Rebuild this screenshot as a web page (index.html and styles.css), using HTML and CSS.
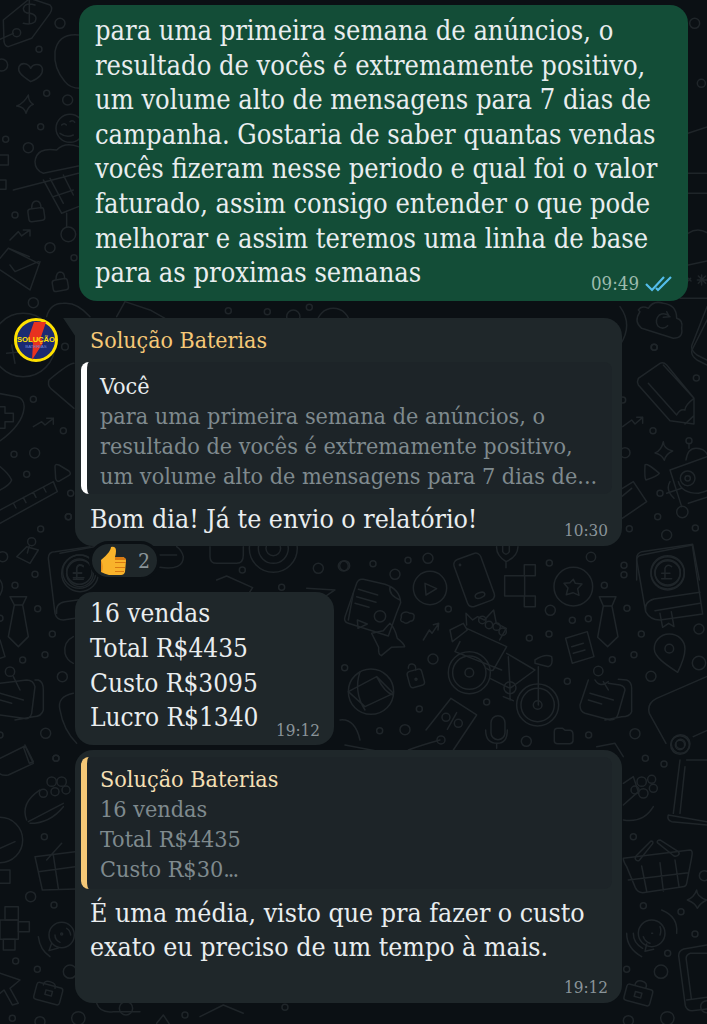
FILE: index.html
```html
<!DOCTYPE html>
<html lang="pt-BR">
<head>
  <meta charset="UTF-8" />
  <meta name="viewport" content="width=device-width, initial-scale=1.0"/>
  <title>Conversa</title>
  <link rel="stylesheet" href="styles.css">
</head>
<body>

  <svg class="wallpaper" width="707" height="1024" viewBox="0 0 707 1024" aria-hidden="true">
    <!-- left top -->
    <g transform="scale(.3333)">
      <path d="M10 60L90-5l60 20q10 10 0 25l-55 75-70 25q-10 0-13-15zM0 118l40-18"/>
      <circle cx="50" cy="98" r="12"/>
      <path d="M105 15q-30-10-35 10 0 15 20 15 25 5 15 25-10 10-35 5M88 0v70"/>
      <circle cx="180" cy="70" r="15"/><circle cx="117" cy="148" r="9"/>
      <path d="M235 105q-60-5-70 50-5 50 30 90 15 20 45 20"/>
      <path d="M92 245c-30-20-40-30-35-45 8-15 28-10 35 5 8-15 30-15 35 0 3 15-10 30-35 40z"/>
      <circle cx="5" cy="195" r="18"/><circle cx="140" cy="280" r="9"/><circle cx="203" cy="300" r="15"/>
      <circle cx="17" cy="418" r="9"/><circle cx="85" cy="443" r="15"/><circle cx="122" cy="380" r="9"/>
      <path d="M85 285q0 20 15 28-15 5-22 27-5-20-28-22 22-8 35-33z"/>
      <circle cx="210" cy="385" r="42"/><path d="M185 375q8-8 14 0M210 365q8-6 14 2M180 400q20 15 40 5"/>
      <path d="M235 440q-40-15-65 10-60-10-65 35 0 25 25 35l105-22"/>
      <path d="M40 570l195-50M130 540l55 100 50-20M150 535l40 75M190 525l30 60M160 590l60-20M200 640v40"/>
      <circle cx="205" cy="703" r="22"/>
      <rect x="85" y="625" width="48" height="38" rx="8" transform="rotate(-8 109 644)"/>
      <path d="M95 625q0-22 14-22 14 0 14 22"/>
      <rect x="158" y="838" width="46" height="34" rx="8" transform="rotate(-10 181 855)"/>
      <path d="M168 838q0-20 12-22 14 0 14 20"/>
      <path d="M30 720l25-25 10 13 25-18M70 690h20v18"/>
      <path d="M0 775l25-30 63 25M0 810l90 60 30-85M30 795l15 20 70-30M25 745l90 45"/>
      <rect x="-8" y="465" width="33" height="30"/><rect x="-8" y="540" width="26" height="28"/>
      <circle cx="150" cy="743" r="15"/><circle cx="222" cy="773" r="9"/><circle cx="45" cy="645" r="9"/>
      <circle cx="100" cy="908" r="15"/>
      <path d="M350 950l25-45 75 25 45 25M140 950q10-40 50-40 40-5 80 40"/>
      <circle cx="685" cy="932" r="9"/><circle cx="802" cy="935" r="9"/><circle cx="928" cy="922" r="9"/>
      <circle cx="1000" cy="975" r="50"/><circle cx="880" cy="950" r="20"/>
    </g>
    <!-- left, next to avatar -->
    <g transform="translate(0 310) scale(.3333)">
      <circle cx="70" cy="105" r="95"/><path d="M20 130l45-5M35 105l10 55"/>
      <circle cx="195" cy="110" r="10"/>
      <path d="M222 160q-15 0-75 50-5 15 5 25l70 60"/>
      <path d="M-5 250l55 10q25 5 22 35-5 50-75 100M0 290h15v20h25v25H15v20H0"/>
      <circle cx="100" cy="268" r="9"/>
      <path d="M100 350l25-15 10 10 25-20M140 325h20v18"/>
      <circle cx="190" cy="362" r="9"/><circle cx="42" cy="433" r="9"/><circle cx="104" cy="429" r="15"/>
      <path d="M165 470q0-10 12-5l30 18q8 8 0 13l-28 17q-10 3-12-8zM0 470q25 20 35 40-5 15-35 30"/>
      <circle cx="80" cy="493" r="9"/><circle cx="212" cy="550" r="9"/>
      <path d="M0 600l160-85 12 30L0 640M40 579l8 15M70 563l8 15M100 547l8 15M130 531l8 15"/>
    </g>
    <!-- left, middle -->
    <g transform="translate(0 500) scale(.3333)">
      <path d="M50 170l40 20 25-40-35-10z"/><circle cx="95" cy="125" r="12"/><path d="M88 137l-6 22"/>
      <circle cx="122" cy="87" r="9"/><circle cx="105" cy="223" r="9"/><circle cx="45" cy="256" r="9"/>
      <circle cx="113" cy="326" r="9"/><circle cx="157" cy="402" r="9"/><circle cx="135" cy="464" r="9"/>
      <circle cx="68" cy="480" r="9"/><circle cx="187" cy="530" r="15"/><circle cx="137" cy="700" r="15"/>
      <circle cx="168" cy="775" r="9"/><circle cx="0" cy="705" r="9"/><circle cx="0" cy="355" r="9"/>
      <circle cx="205" cy="50" r="9"/><circle cx="8" cy="170" r="15"/>
      <path d="M30 290h50l-12 25 17 95-30 30-30-30 18-95zM43 315h25"/>
      <path d="M145 175q0-20 20-20l105-15M145 175l20 165q5 20 25 20l35-5M170 340q-5-30 25-35l75-10"/>
      <circle cx="238" cy="215" r="50"/><circle cx="238" cy="215" r="38"/>
      <path d="M250 198q-15-10-20 5v30M220 218h25M220 233h32"/>
      <circle cx="30" cy="515" r="14"/><path d="M40 530l20 40"/>
      <path d="M0 550l80-10q20 0 25 20l-10 80q-5 20-25 15l-70-10M105 540h10q15 5 15 30v60q-5 20-30 20l-55 10M0 580l70 20M0 600l35 10"/>
      <path d="M0 775l75-37 25 52-75 35q-25 5-35-15M75 735l25 50-12 5-18-50"/>
      <path d="M220 580q-50 10-40 50 10 60 50 100M220 410q-30 15-25 50 5 20 25 30"/>
      <path d="M0 240q15 20 0 45M0 420l15 50-15 5"/>
    </g>
    <!-- left, bottom -->
    <g transform="translate(0 740) scale(.3333)">
      <circle cx="168" cy="55" r="9"/>
      <path d="M85 245l105-55M80 240q-20-50 40-90M90 250q60 0 100-50"/>
      <circle cx="155" cy="125" r="14"/><circle cx="185" cy="125" r="14"/><circle cx="130" cy="160" r="12"/>
      <circle cx="165" cy="155" r="12"/><circle cx="198" cy="150" r="12"/>
      <circle cx="0" cy="300" r="68"/><path d="M0 325l45-20"/>
      <circle cx="133" cy="290" r="9"/>
      <path d="M105 350l120-15M105 350l22 100 100-3M115 395l110-15M160 345l15 100M140 360l45-50M0 390h30v40H0"/>
      <circle cx="92" cy="470" r="15"/><circle cx="162" cy="495" r="9"/>
      <rect x="15" y="500" width="40" height="40"/><rect x="0" y="540" width="55" height="58"/>
      <rect x="55" y="545" width="33" height="30"/><rect x="10" y="598" width="35" height="32"/>
      <circle cx="185" cy="585" r="38"/><path d="M155 610l-8 22 28-8M165 585q0 15 15 22M115 590q5 40 35 60M200 565q10 5 12 20"/>
      <circle cx="185" cy="582" r="3"/>
      <circle cx="47" cy="663" r="9"/><circle cx="112" cy="688" r="9"/><circle cx="210" cy="695" r="20"/>
      <path d="M0 700l60 20-30 25 25 45-18 5-25-45-12 10"/>
      <rect x="105" y="735" width="80" height="52" rx="8" transform="rotate(15 145 760)"/>
      <path d="M130 735q3-15 20-10 20 5 15 20"/><rect x="136" y="752" width="20" height="14" transform="rotate(15 146 759)"/>
      <circle cx="235" cy="835" r="20"/><circle cx="120" cy="845" r="15"/><circle cx="37" cy="835" r="9"/>
      <circle cx="378" cy="805" r="20"/><circle cx="555" cy="825" r="9"/><circle cx="855" cy="802" r="9"/>
      <path d="M290 790q10 30 50 25h80M600 830l70-35 60 25M470 850l20-25 20 30"/>
    </g>
    <!-- gap under first incoming bubble -->
    <g transform="translate(60 490) scale(.3333)">
      <circle cx="60" cy="250" r="55"/><circle cx="60" cy="250" r="40"/><path d="M70 230q-15-10-20 5v30M40 250h25M40 268h30"/>
      <path d="M450 170v30q0 20 20 20h60q20 0 20-25v-25M300 195h50M300 232q70 10 70-32-5-20-20-30"/>
      <circle cx="640" cy="175" r="72"/><circle cx="640" cy="175" r="45"/><circle cx="640" cy="175" r="22"/>
      <circle cx="547" cy="240" r="9"/><circle cx="775" cy="235" r="15"/><circle cx="850" cy="228" r="15"/>
      <path d="M470 270l30-12 78 35-10 15M740 295l85 5-30 20M880 310l-15 80M0 190l130-25"/>
      <circle cx="665" cy="292" r="9"/><circle cx="25" cy="80" r="9"/>
    </g>
    <!-- right of short bubble -->
    <g transform="translate(340 540) scale(.3333)">
      <circle cx="14" cy="77" r="15"/><circle cx="99" cy="71" r="9"/><circle cx="165" cy="103" r="15"/>
      <circle cx="204" cy="61" r="9"/><circle cx="264" cy="55" r="15"/><circle cx="325" cy="207" r="9"/>
      <circle cx="628" cy="69" r="9"/><circle cx="753" cy="51" r="14"/><circle cx="793" cy="136" r="9"/>
      <circle cx="852" cy="104" r="9"/><circle cx="631" cy="211" r="15"/><circle cx="697" cy="241" r="9"/>
      <circle cx="745" cy="236" r="9"/><circle cx="861" cy="205" r="9"/><circle cx="568" cy="294" r="9"/>
      <circle cx="627" cy="282" r="9"/><circle cx="904" cy="282" r="9"/><circle cx="1077" cy="267" r="15"/>
      <circle cx="882" cy="344" r="9"/><circle cx="817" cy="359" r="9"/><circle cx="1077" cy="369" r="20"/>
      <circle cx="933" cy="409" r="15"/><circle cx="682" cy="424" r="9"/><circle cx="279" cy="357" r="15"/>
      <circle cx="14" cy="383" r="9"/><circle cx="440" cy="486" r="9"/><circle cx="238" cy="507" r="9"/>
      <circle cx="119" cy="572" r="9"/><circle cx="195" cy="569" r="15"/><circle cx="559" cy="604" r="15"/>
      <circle cx="746" cy="585" r="9"/><circle cx="885" cy="581" r="15"/>
      <circle cx="270" cy="144" r="50"/><path d="M255 130l35 16-32 19z"/>
      <rect x="360" y="45" width="85" height="150" rx="16" transform="rotate(-20 402 120)"/>
      <ellipse cx="420" cy="166" rx="15" ry="8" transform="rotate(-20 420 166)"/><circle cx="360" cy="75" r="2"/>
      <path d="M470 20q-2 25 28 45 35-15 36-45M498 65v18M488 0v35q10 15 20 0V0"/>
      <rect x="553" y="74" width="33" height="33"/><rect x="494" y="107" width="60" height="61"/><rect x="553" y="168" width="33" height="32"/>
      <circle cx="700" cy="140" r="58"/>
      <path d="M700 118l6 12 20 2-13 14 4 20-18-8-20 6 5-20-12-14 18-2z"/>
      <path d="M778 170h50l-12 28 18 92-31 30-30-28 17-94zM790 198h26"/>
      <path d="M905 45l152-30 31 207-128 18q-30 0-43-25L890 60q0-12 15-15zM917 215q-5-30 25-38l138-20M945 212l135-22M960 220l8 42 18-12 16 10-8-45"/>
      <circle cx="983" cy="97" r="50"/><circle cx="983" cy="97" r="38"/>
      <path d="M995 80q-15-10-20 5v30M965 100h25M965 116h30"/>
      <path d="M988 282c-30 0-46 25-45 45 0 25 40 50 70 70 15-30 22-55 22-70 0-25-20-45-47-45z"/><circle cx="988" cy="326" r="13"/>
      <path d="M70 118l65 15q45 15 47 55l-12 30-25 70-120-38q-15-5-10-20l35-100q5-15 20-12zM150 140q-5 25 30 40M55 148l58 17M50 170l58 17M45 190l42 12M52 240l30 12-28 13z"/>
      <circle cx="120" cy="229" r="17"/>
      <path d="M150 250q15 15 22 45 20 15 22 25l-40 2-30 25q-10-3-8-25L95 280l35-8q10-12 20-22zM190 218q10-5 20 2 15 0 12 12 0 12-12 12-12 10-20 2-12-2-6-14-2-10 6-14z"/>
      <path d="M250 300l18-30 8 10 19-28M280 254l16-4-2 20"/>
      <circle cx="388" cy="398" r="63"/><circle cx="388" cy="398" r="50"/><circle cx="388" cy="398" r="13"/>
      <circle cx="593" cy="495" r="63"/><circle cx="593" cy="495" r="50"/><circle cx="593" cy="495" r="13"/>
      <path d="M330 270l40-20 12 20-45 35zM380 265l120 55-40 70q-10 5-20-5M360 305l-15 30 140 55M500 340l85 50-75 55-60-30M505 350l5 90M595 380v115M585 360q30-20 50-10 5 25-10 30l-40-10zM490 470l30 12M510 440v40"/>
      <path d="M380 255l-2-35 20 20 15-10 20 10 28-30 8 40 30 15-20 35"/>
      <circle cx="427" cy="240" r="11"/><circle cx="447" cy="255" r="11"/><circle cx="470" cy="260" r="11"/><circle cx="488" cy="275" r="11"/>
      <circle cx="510" cy="443" r="18"/>
      <path d="M677 295l65-20 20 75-65 20zM695 320l35-10M700 340l35-10"/>
      <circle cx="775" cy="393" r="14"/><path d="M765 420q15 25 40 5M790 425l15 25"/>
      <path d="M745 420l-25 75q0 20 15 25l75 20q20 0 25-20l20-70q0-10-15-15l-35-5M835 418l25 2q15 5 15 25v70q-5 15-30 15l-50 10M750 460l70 20M745 480l40 12"/>
      <circle cx="93" cy="455" r="68"/><path d="M25 455l85-45 50 50-85 40zM60 395q-20 60 15 115M110 410q25 50 50 55"/>
      <rect x="205" y="390" width="45" height="50" rx="10" transform="rotate(-15 228 415)"/><path d="M205 385q0-15 12-13 12 2 10 18"/><circle cx="228" cy="418" r="3"/>
      <path d="M258 570l75-95 77 50-70 105M205 630q40-15 95-30"/><circle cx="318" cy="532" r="12"/><circle cx="355" cy="550" r="12"/><path d="M350 518l-28 50"/>
      <circle cx="303" cy="600" r="12"/>
      <rect x="453" y="527" width="42" height="72" rx="21"/><path d="M437 570q0 40 35 40 30 0 30-40M470 610v15"/>
      <path d="M643 575q0-10 10-10h15l8 6h15q8 2 8 12v20q-2 8-10 8h-36q-10 0-10-8z"/>
      <path d="M1100 410L950 475q-30 15-22 45l50 90M1060 590l40-18"/><circle cx="1022" cy="612" r="28"/><circle cx="1022" cy="612" r="14"/>
      <path d="M0 540q45-5 60 60M15 615l130 25M770 620l55-10M825 610l25 40"/>
    </g>
    <!-- right column -->
    <g transform="translate(620 300) scale(.3333)">
      <path d="M60 35q-20 30 5 50l95 30q30 0 25-30 5-25-15-30 0-40-40-45-30-10-45 15-20-10-30 5z"/><path d="M150 50q-15-15-32-5-15 15-5 32 15 15 30 0M140 35l8 15-18 2"/>
      <circle cx="102" cy="142" r="9"/><circle cx="229" cy="234" r="9"/>
      <path d="M55 235l65-45q10-5 20 5l82 100v77l-72-10-95-107q-5-10 0-20zM85 250l85 95M130 195l92 100M170 345q10-20 25-15 0-15 27-35M195 372l27-25"/>
      <circle cx="99" cy="392" r="9"/>
      <path d="M130 425q0 20 28 28-20 8-25 28-8-18-28-22 20-8 25-34zM75 495q5-8 43 25-5 8-40 20-5-5-3-45zM8 380l27-20 10 12 23-20M50 352h18v18"/>
      <circle cx="8" cy="300" r="9"/><circle cx="15" cy="458" r="15"/>
      <path d="M150 510l111-40M150 510l35 110M205 610l56-18M198 480q5-35 30-35 25 0 35 20M207 430v15M150 545q-15 25 12 50"/>
      <circle cx="187" cy="636" r="17"/><circle cx="203" cy="535" r="22"/><circle cx="203" cy="535" r="8"/>
      <path d="M175 545q10 35 60 35 20-5 30-10M185 565l-45 15"/>
      <circle cx="207" cy="422" r="9"/><circle cx="120" cy="580" r="9"/><circle cx="113" cy="650" r="9"/>
      <circle cx="28" cy="686" r="9"/><circle cx="140" cy="705" r="15"/><circle cx="226" cy="684" r="9"/>
      <path d="M0 660l80-55-40-60L0 570M5 590l30-25"/>
      <path d="M50 840V775q0-15 15-20l153-22 20 107"/><circle cx="143" cy="820" r="50"/><circle cx="143" cy="820" r="38"/>
      <circle cx="12" cy="796" r="9"/>
      <path d="M0 135q40-60 0-115M261 60l-45 90q-5 15 15 30l30 15"/>
    </g>
    <!-- right column, bottom -->
    <g transform="translate(610 740) scale(.3333)">
      <circle cx="106" cy="55" r="9"/><circle cx="162" cy="72" r="9"/><circle cx="70" cy="290" r="9"/>
      <circle cx="210" cy="15" r="28"/><circle cx="210" cy="15" r="14"/>
      <path d="M40 130l30-20 15 45-45 40M40 240q60 10 90-40"/>
      <circle cx="95" cy="125" r="14"/><circle cx="125" cy="118" r="12"/><circle cx="130" cy="145" r="12"/><circle cx="100" cy="160" r="14"/><circle cx="75" cy="150" r="12"/>
      <path d="M210 60l-20 160M230 60h61M225 80l-15 140M175 225l116 20M175 225q-5 15 10 20l106 10"/>
      <path d="M40 355l200-25q10 0 5 22L230 430q-2 10-12 10l-120 18q-15 0-22-15L50 380q-10-15-10-25zM95 378l15 75M150 368l10 85M195 360l12 80M55 420l180-22"/>
      <path d="M78 360q-5-5 0-12l45-45q8 0 5 8l-40 50q-5 3-10-1zM205 345q5-5 0-10l-55-35q-10 0-8 8l50 40q8 2 13-3z"/>
      <path d="M260 450q0 20 30 30-20 10-28 25-5-15-30-25 20-8 28-30z"/>
      <circle cx="100" cy="497" r="9"/><circle cx="213" cy="515" r="9"/><circle cx="255" cy="582" r="9"/>
      <circle cx="283" cy="407" r="15"/><circle cx="173" cy="640" r="9"/><circle cx="50" cy="688" r="9"/><circle cx="153" cy="695" r="20"/>
      <circle cx="125" cy="580" r="40"/><path d="M110 612l-5 22 26-6M125 580h3M100 590q5 15 20 20M150 560q5 10 0 25"/>
      <path d="M50 580q0 45 45 70M155 510q50 20 45 70M70 580q0 30 28 45"/>
      <rect x="45" y="740" width="80" height="50" rx="8" transform="rotate(15 85 765)"/>
      <path d="M75 735q3-15 20-12 20 5 12 22"/><rect x="74" y="757" width="20" height="15" transform="rotate(15 84 765)"/>
      <path d="M291 615l-70 12q-15 5-15 20l20 150q5 15 20 15l45-5M291 640h-50q-15 5-12 20l15 115M230 780l61-8"/>
      <circle cx="55" cy="842" r="15"/><circle cx="172" cy="835" r="20"/><circle cx="290" cy="800" r="18"/>
    </g>
    <!-- far right top -->
    <g transform="translate(520 250) scale(.3333)">
      <path d="M505 45l56-12M505 85l8 8M512 85l-8 8M545 75v30M532 90h28M535 78l22 22M557 78l-22 22M480 145h81"/>
      <circle cx="403" cy="292" r="9"/>
      <path d="M561 170l-45 115q-5 15 15 30l30 15"/>
    </g>
    <g transform="translate(688 0) scale(.3333)">
      <circle cx="20" cy="70" r="15"/><circle cx="40" cy="250" r="12"/><path d="M0 400l60-20M0 520h60v60H0M0 700q30-20 60 0"/>
    </g>
  </svg>

  <div class="chat">
    <div class="msg out">
      <div class="foot">
        <p>para uma primeira semana de anúncios, o<br>resultado de vocês é extremamente positivo,<br>um volume alto de mensagens para 7 dias de<br>campanha. Gostaria de saber quantas vendas<br>vocês fizeram nesse periodo e qual foi o valor<br>faturado, assim consigo entender o que pode<br>melhorar e assim teremos uma linha de base<br>para as proximas semanas</p>
        <span class="time time-out">09:49
          <svg class="ticks" width="28" height="18" viewBox="0 0 28 18"><path d="M1 9l6 6L19 2M11 13l2 2L26 2"/></svg>
        </span>
      </div>
    </div>

    <div class="group">
      <svg class="avatar" width="44" height="44" viewBox="0 0 44 44">
        <circle cx="22" cy="22" r="20.5" fill="#1b2a72" stroke="#ffe100" stroke-width="3"/>
        <path d="M20 4h12l-5 15 2 6-11 17 1-17-5-4z" fill="#e8321f"/>
        <text x="22" y="23.5" class="av-big">SOLUÇÃO</text>
        <text x="22" y="30" class="av-small">BATERIAS</text>
      </svg>
      <div class="msg in first">
        <div class="sender">Solução Baterias</div>
        <div class="quote me">
          <div class="q-name">Você</div>
          <div>para uma primeira semana de anúncios, o<br>resultado de vocês é extremamente positivo,<br>um volume alto de mensagens para 7 dias de...</div>
        </div>
        <div class="foot text">
          <p>Bom dia! Já te envio o relatório!</p>
          <span class="time">10:30</span>
        </div>
      </div>
    </div>

    <div class="reaction">
      <svg width="27" height="29" viewBox="0 0 27 29">
        <path d="M1 14q5-4 8-8 2-3 2-5 5-1 5 4 0 3-1 6h8q3 1 3 4l-1 11q-1 3-4 3H9q-4-1-8-3z" fill="#f9b32b"/>
        <path d="M15 11h8q3 1 3 3H15zM15 16h11v1H15zM15 21h10v1H15zM15 25h9v1H15z" fill="#d97a12"/>
        <path d="M1 14q3 6 1 12l-1-1z" fill="#e8901c"/>
      </svg>
      <span>2</span>
    </div>

    <div class="msg in short">
      <div class="foot text">
        <p>16 vendas<br>Total R$4435<br>Custo R$3095<br>Lucro R$1340</p>
        <span class="time">19:12</span>
      </div>
    </div>

    <div class="msg in last">
      <div class="quote them">
        <div class="q-name">Solução Baterias</div>
        <div>16 vendas<br>Total R$4435<br>Custo R$30<span class="dots">...</span></div>
      </div>
      <div class="text">
        <p>É uma média, visto que pra fazer o custo<br>exato eu preciso de um tempo à mais.</p>
      </div>
      <div class="time time-row">19:12</div>
    </div>
  </div>

</body>
</html>
```

FILE: styles.css
```css
* {
  box-sizing: border-box;
}

body {
  margin: 0;
  width: 707px;
  height: 1024px;
  overflow: hidden;
  position: relative;
  background: #0b1014;
  font-family: "DejaVu Serif Condensed", "DejaVu Serif", serif;
}

p {
  margin: 0;
}

.wallpaper {
  position: absolute;
  top: 0;
  left: 0;
  fill: none;
  stroke: #1f2529;
  stroke-width: 4.5;
  stroke-linecap: round;
  stroke-linejoin: round;
}

.chat {
  position: relative;
  display: flex;
  flex-direction: column;
  padding-top: 5px;
}

.msg {
  border-radius: 18px;
  color: #e9edef;
  font-size: 26.5px;
  line-height: 34.6px;
  white-space: nowrap;
}

.foot {
  display: flex;
  justify-content: space-between;
  align-items: flex-end;
}

.foot p {
  flex: 1;
  min-width: 0;
}

.time {
  font-size: 17px;
  line-height: 20px;
  color: #8a9499;
  margin-bottom: -4px;
}

/* outgoing */
.out {
  width: 609px;
  margin-left: 79px;
  padding: 9px 15px 10px 16px;
  background: #134d37;
  font-size: 27px;
}

.time-out {
  display: flex;
  align-items: center;
  gap: 6px;
  font-size: 18.5px;
  color: #9dbbae;
  margin-bottom: -3px;
}

.ticks {
  fill: none;
  stroke: #53bdeb;
  stroke-width: 2.2;
}

/* incoming */
.group {
  display: flex;
  gap: 17px;
  margin-top: 17px;
  padding-left: 14px;
}

.avatar {
  flex-shrink: 0;
}

.av-big {
  font-family: "Liberation Sans", sans-serif;
  font-size: 7.6px;
  font-weight: bold;
  fill: #ffe100;
  stroke: none;
  text-anchor: middle;
}

.av-small {
  font-family: "Liberation Sans", sans-serif;
  font-size: 4.4px;
  fill: #6f86d6;
  text-anchor: middle;
}

.in {
  background: #1f272a;
  padding: 0 10px 0 6px;
  position: relative;
}

.first {
  width: 547px;
  padding-top: 8px;
  padding-bottom: 10px;
  border-top-left-radius: 0;
}

.first::before {
  content: "";
  position: absolute;
  left: -12px;
  top: 0;
  width: 12px;
  height: 18px;
  background: #1f272a;
  clip-path: polygon(0 0, 100% 0, 100% 100%);
}

.sender {
  margin-left: 9px;
  font-size: 23px;
  line-height: 28px;
  color: #f5c877;
}

.text {
  margin-left: 9px;
  padding-right: 4px;
}

.quote {
  background: #1d2428;
  border-left: 6px solid;
  border-radius: 8px;
  padding-left: 13px;
  color: #7f8a8e;
  font-size: 23.2px;
  line-height: 30px;
}

.q-name {
  color: #e9edef;
}

.dots {
  letter-spacing: -2px;
}

.me {
  margin-top: 8px;
  padding-top: 9px;
  padding-bottom: 3px;
  margin-bottom: 8px;
  border-left-color: #fff;
}

.them {
  margin-top: 7px;
  padding-top: 7px;
  padding-bottom: 5px;
  margin-bottom: 7px;
  border-left-color: #f5c877;
}

.them .q-name {
  color: #f3dfb4;
}

.reaction {
  display: flex;
  align-items: center;
  gap: 11px;
  width: 71px;
  height: 39px;
  margin: -5px 0 0 89px;
  padding-left: 8px;
  position: relative;
  border: 3px solid #0b1014;
  border-radius: 20px;
  background: #1f272a;
  color: #8a9499;
  font-size: 21px;
}

.short {
  width: 259px;
  margin: 12px 0 0 75px;
  padding-top: 4px;
  padding-bottom: 10px;
  font-size: 26px;
}

.short .time {
  margin-bottom: -5px;
}

.last {
  width: 547px;
  margin: 5px 0 0 75px;
  padding-bottom: 6px;
}

.time-row {
  margin: 12px 4px 0 0;
  text-align: right;
}
```
